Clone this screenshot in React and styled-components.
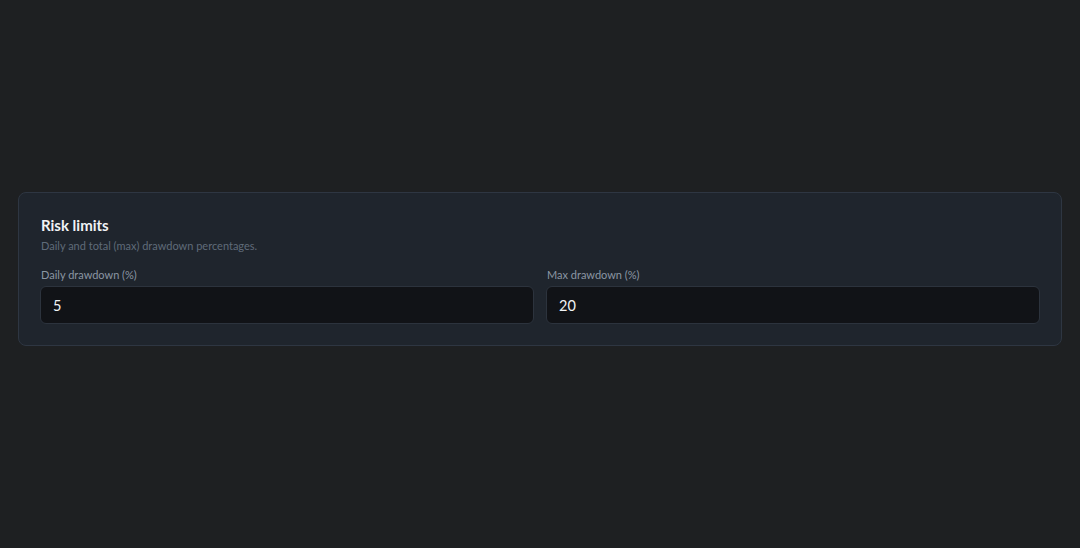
import { createGlobalStyle, styled } from "styled-components";

const GlobalStyle = createGlobalStyle`
  html, body {
    margin: 0;
    padding: 0;
    background: #1e2022;
    font-family: "Segoe UI", Lato, "Noto Sans", sans-serif;
  }
`;

const Page = styled.main`
  box-sizing: border-box;
  min-height: 100vh;
  padding: 192px 18px 0;
`;

const Card = styled.section`
  box-sizing: border-box;
  background: #1f252d;
  border: 1px solid #2e3642;
  border-radius: 8px;
  padding: 22px 21px 21px;
`;

const Title = styled.h2`
  margin: 0 0 0 1px;
  font-size: 15px;
  line-height: 21px;
  font-weight: 700;
  color: #f1f3f5;
`;

const Subtitle = styled.p`
  margin: 3px 0 0 1px;
  font-size: 11px;
  line-height: 14px;
  color: #5f6b79;
`;

const Fields = styled.div`
  display: grid;
  grid-template-columns: 1fr 1fr;
  gap: 12px;
  margin-top: 15px;
`;

const Field = styled.label`
  display: flex;
  flex-direction: column;
  gap: 4px;
`;

const Label = styled.span`
  margin-left: 1px;
  font-size: 11px;
  line-height: 14px;
  color: #8b96a3;
`;

const Input = styled.input`
  box-sizing: border-box;
  height: 38px;
  padding: 0 12px;
  background: #111317;
  border: 1px solid #2c333d;
  border-radius: 6px;
  color: #f1f3f5;
  font: inherit;
  font-size: 14.5px;
  outline: none;
`;

const fields = [
  { id: "daily", label: "Daily drawdown (%)", value: "5" },
  { id: "max", label: "Max drawdown (%)", value: "20" },
];

export default function App() {
  return (
    <>
      <GlobalStyle />
      <Page>
        <Card>
          <Title>Risk limits</Title>
          <Subtitle>Daily and total (max) drawdown percentages.</Subtitle>
          <Fields>
            {fields.map((f) => (
              <Field key={f.id}>
                <Label>{f.label}</Label>
                <Input type="text" defaultValue={f.value} />
              </Field>
            ))}
          </Fields>
        </Card>
      </Page>
    </>
  );
}
